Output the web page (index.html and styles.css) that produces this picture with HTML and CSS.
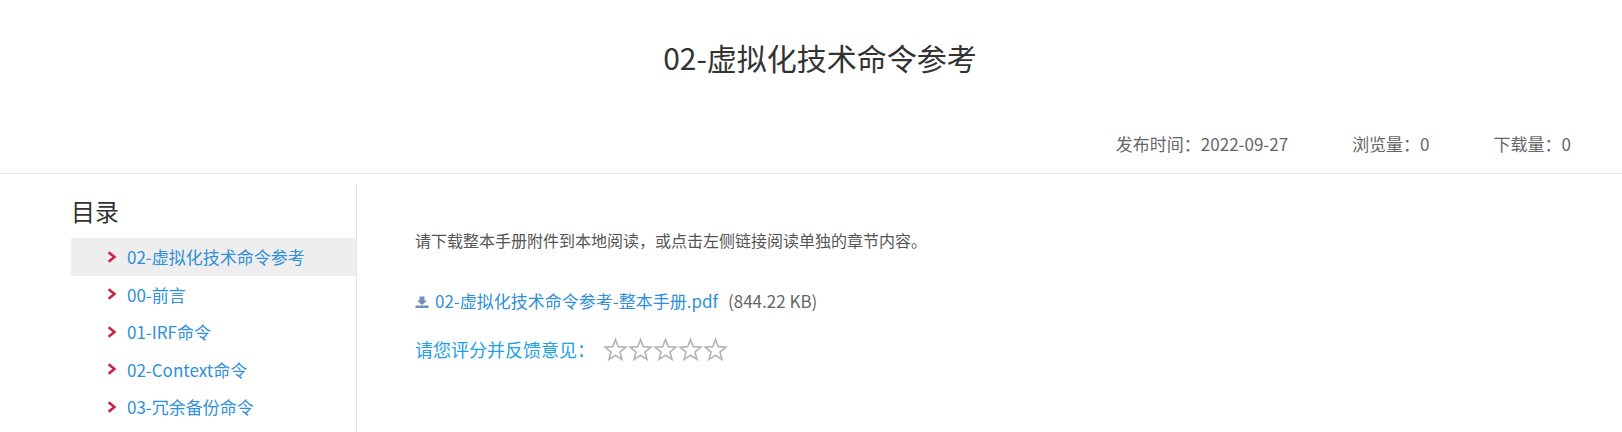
FILE: index.html
```html
<!DOCTYPE html>
<html lang="zh-CN">
<head>
<meta charset="utf-8">
<title>02-虚拟化技术命令参考</title>
<link rel="stylesheet" href="styles.css">
</head>
<body>
<header class="head">
  <h1 class="title">02-虚拟化技术命令参考</h1>
  <div class="meta">
    <span class="meta-item meta-date">发布时间：2022-09-27</span>
    <span class="meta-item meta-views">浏览量：0</span>
    <span class="meta-item">下载量：0</span>
  </div>
</header>
<div class="main">
  <aside class="side">
    <h2 class="side-title">目录</h2>
    <ul class="toc">
      <li class="toc-item active"><svg class="chev" viewBox="0 0 8 10"><path d="M1.2 1 L6 5 L1.2 9" /></svg><a href="#">02-虚拟化技术命令参考</a></li>
      <li class="toc-item"><svg class="chev" viewBox="0 0 8 10"><path d="M1.2 1 L6 5 L1.2 9" /></svg><a href="#">00-前言</a></li>
      <li class="toc-item"><svg class="chev" viewBox="0 0 8 10"><path d="M1.2 1 L6 5 L1.2 9" /></svg><a href="#">01-IRF命令</a></li>
      <li class="toc-item"><svg class="chev" viewBox="0 0 8 10"><path d="M1.2 1 L6 5 L1.2 9" /></svg><a href="#">02-Context命令</a></li>
      <li class="toc-item"><svg class="chev" viewBox="0 0 8 10"><path d="M1.2 1 L6 5 L1.2 9" /></svg><a href="#">03-冗余备份命令</a></li>
    </ul>
  </aside>
  <section class="content">
    <p class="notice">请下载整本手册附件到本地阅读，或点击左侧链接阅读单独的章节内容。</p>
    <p class="file">
      <svg class="dl" viewBox="0 0 14 12"><path d="M4.5 0.5 H9.5 V4.5 H12 L7 9 L2 4.5 H4.5 Z M0.5 9.5 H13.5 V12 H0.5 Z" /></svg>
      <a href="#">02-虚拟化技术命令参考-整本手册.pdf</a><span class="size">(844.22 KB)</span>
    </p>
    <div class="rate">
      <span class="rate-label">请您评分并反馈意见：</span>
      <span class="stars">
        <svg class="star" viewBox="0 0 24 24"><path d="M12 2.5 L14.7 9.3 L22 9.8 L16.3 14.4 L18.2 21.5 L12 17.6 L5.8 21.5 L7.7 14.4 L2 9.8 L9.3 9.3 Z" /></svg>
        <svg class="star" viewBox="0 0 24 24"><path d="M12 2.5 L14.7 9.3 L22 9.8 L16.3 14.4 L18.2 21.5 L12 17.6 L5.8 21.5 L7.7 14.4 L2 9.8 L9.3 9.3 Z" /></svg>
        <svg class="star" viewBox="0 0 24 24"><path d="M12 2.5 L14.7 9.3 L22 9.8 L16.3 14.4 L18.2 21.5 L12 17.6 L5.8 21.5 L7.7 14.4 L2 9.8 L9.3 9.3 Z" /></svg>
        <svg class="star" viewBox="0 0 24 24"><path d="M12 2.5 L14.7 9.3 L22 9.8 L16.3 14.4 L18.2 21.5 L12 17.6 L5.8 21.5 L7.7 14.4 L2 9.8 L9.3 9.3 Z" /></svg>
        <svg class="star" viewBox="0 0 24 24"><path d="M12 2.5 L14.7 9.3 L22 9.8 L16.3 14.4 L18.2 21.5 L12 17.6 L5.8 21.5 L7.7 14.4 L2 9.8 L9.3 9.3 Z" /></svg>
      </span>
    </div>
  </section>
</div>
</body>
</html>
```
FILE: styles.css
```css
* { box-sizing: border-box; }
html, body { margin: 0; padding: 0; }
body {
  height: 432px;
  overflow: hidden;
  background: #fff;
  color: #666;
  font-family: "Noto Sans CJK SC", "Open Sans", sans-serif;
  font-size: 16px;
}
.head {
  height: 174px;
  border-bottom: 1px solid #e6e6e6;
  display: flex;
  flex-direction: column;
}
.title {
  margin: 0;
  padding: 37px 0 0 18px;
  height: 129px;
  text-align: center;
  font-size: 30px;
  line-height: 40px;
  font-weight: 400;
  color: #333;
}
.meta {
  display: flex;
  justify-content: flex-end;
  padding-right: 51px;
  line-height: 30px;
  font-size: 17px;
}
.meta-date { margin-right: 64px; }
.meta-views { margin-right: 64px; }
.main {
  display: flex;
  align-items: flex-start;
  padding: 10px 0 0 71px;
}
.side {
  width: 286px;
  height: 248px;
  border-right: 1px solid #e6e6e6;
  flex: none;
}
.side-title {
  margin: 0;
  height: 54px;
  font-size: 24px;
  line-height: 54px;
  font-weight: 400;
  color: #333;
}
.toc { list-style: none; margin: 0; padding: 0; }
.toc-item {
  display: flex;
  align-items: center;
  height: 37.5px;
  padding-left: 36px;
  font-size: 17px;
}
.toc-item.active { background: #eee; }
.toc-item a, .file a { color: #2f8fd8; text-decoration: none; }
.chev {
  width: 10px;
  height: 12px;
  margin-right: 10px;
  fill: none;
  stroke: #c8283f;
  stroke-width: 2.2;
}
.content { padding: 0 0 0 58px; }
.notice {
  margin: 0;
  padding-top: 42px;
  font-size: 16px;
  line-height: 28px;
  color: #555;
}
.file {
  display: flex;
  align-items: center;
  margin: 31px 0 0;
  height: 30px;
  font-size: 17px;
}
.dl { width: 14px; height: 12px; margin: 3px 6px 0 0; fill: #6d8fb8; }
.size { margin-left: 10px; color: #666; }
.rate {
  display: flex;
  align-items: center;
  margin-top: 16px;
  height: 36px;
}
.rate-label { color: #1e9fe6; font-size: 18px; }
.stars { display: flex; margin-left: 8px; }
.star {
  width: 25px;
  height: 25px;
  fill: #fff;
  stroke: #b5b5b5;
  stroke-width: 1.6;
}
```
